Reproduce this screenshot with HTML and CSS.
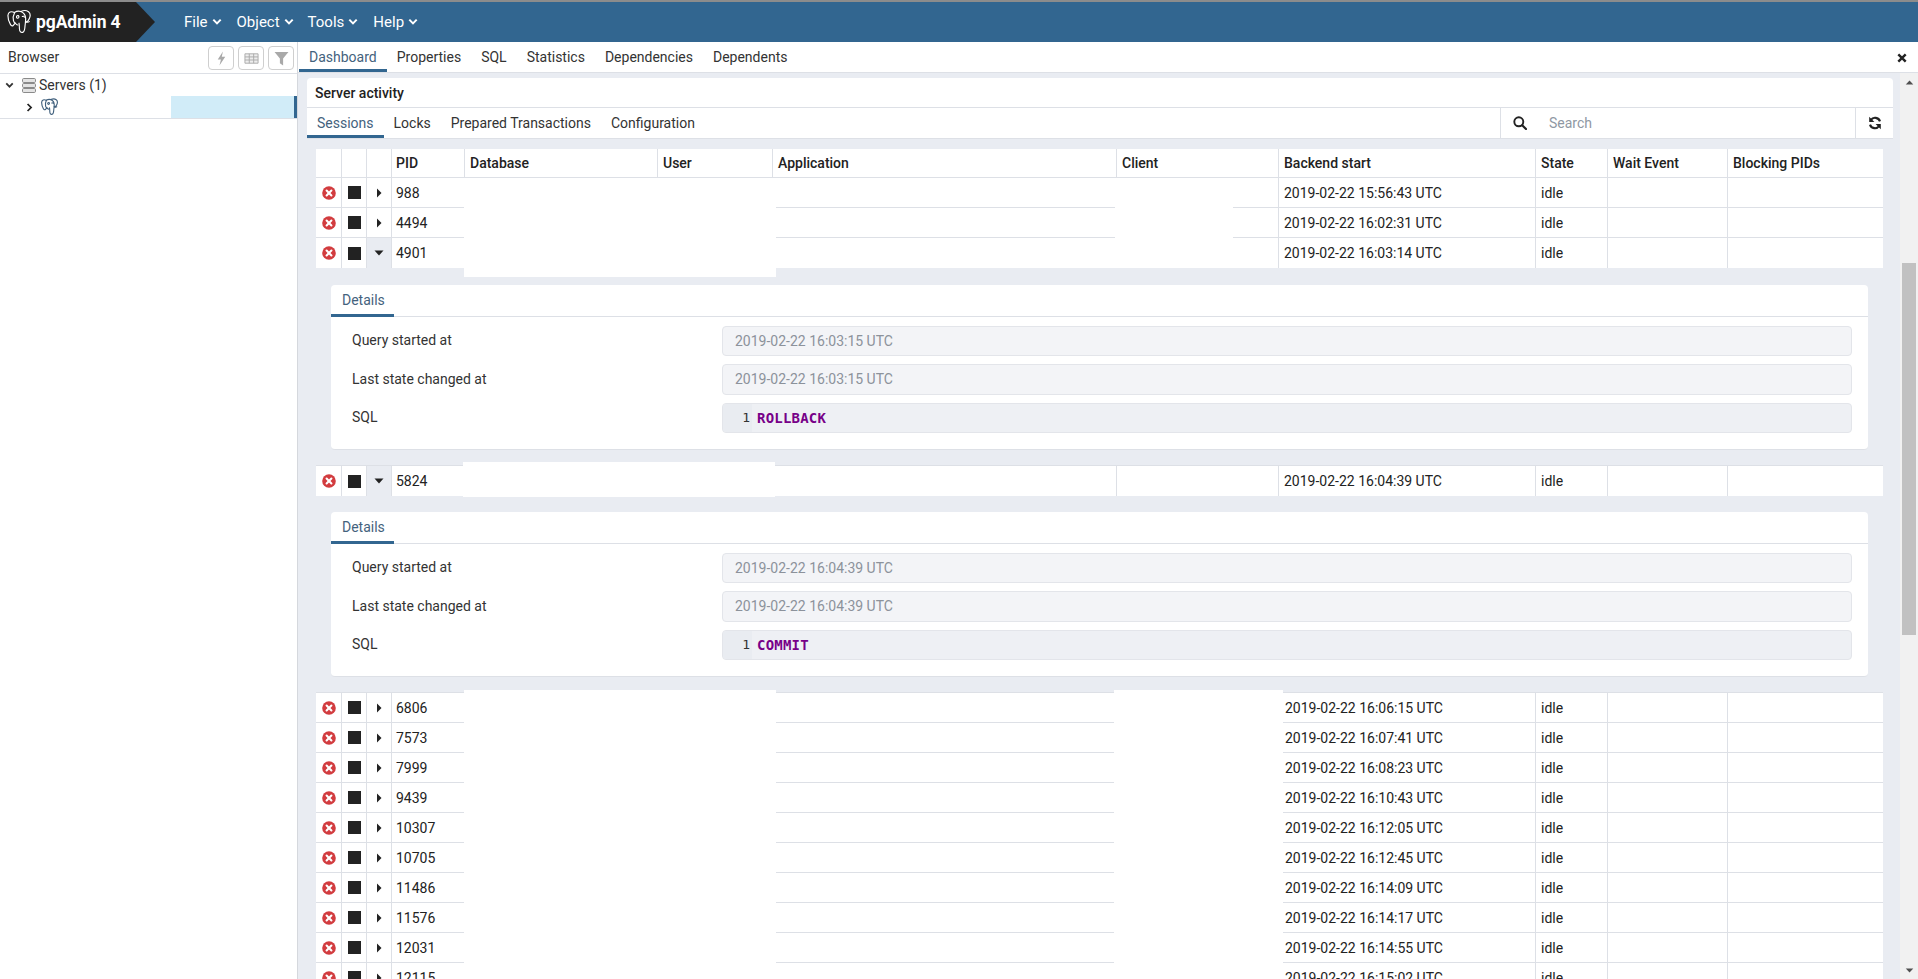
FILE: index.html
```html
<!DOCTYPE html>
<html lang="en">
<head>
<meta charset="utf-8">
<title>pgAdmin 4</title>
<link rel="stylesheet" href="styles.css">
</head>
<body>
<svg class="sprite" width="0" height="0" aria-hidden="true">
  <symbol id="i-cancel" viewBox="0 0 14 14"><circle cx="7" cy="7" r="6.8" fill="#d23c3f"/><path d="M4.6 4.6l4.8 4.8M9.4 4.6l-4.8 4.8" stroke="#fff" stroke-width="2.1" stroke-linecap="round"/></symbol>
  <symbol id="i-right" viewBox="0 0 6 10"><path d="M1 0.5v9L5.5 5z" fill="#222"/></symbol>
  <symbol id="i-down" viewBox="0 0 10 6"><path d="M0.5 0.5h9L5 5.5z" fill="#222"/></symbol>
  <symbol id="i-chev" viewBox="0 0 10 8"><path d="M1.3 1.6L5 5.4l3.7-3.8" fill="none" stroke="currentColor" stroke-width="2"/></symbol>
  <symbol id="i-chev-r" viewBox="0 0 8 10"><path d="M1.8 1L5.8 5l-4 4" fill="none" stroke="currentColor" stroke-width="2"/></symbol>
  <symbol id="i-pg" viewBox="0 0 26 27">
    <g fill="none" stroke="currentColor" stroke-linecap="round" stroke-linejoin="round">
      <path d="M8 3.2C4.6 1.4 1.2 2.6 1 6.4c-.1 3 1.500 7.500 2.700 9.700.8 1.500 2 2.100 3 1.200.7-.6 1.200-1.400 1.700-2"/>
      <path d="M8 3.200C10 2 12.500 1.300 15 2.200c2.500-1.300 6-1.500 8.300.2 2.200 1.700 2 5 .8 7.600-.8 1.800-1.900 3.100-3.100 3.700"/>
      <path d="M8.200 3.400C6.800 6 6.300 9.300 7 12c.4 1.600 1.200 2.700 2.300 3"/>
      <path d="M15 2.200c3 1.300 5 4 5.200 7.300.2 2.800-.5 6-.7 8.500-.2 2.700-.2 6-2.500 6.700-2.200.6-3.400-1.300-3.500-3.700-.1-2-.1-4.500-.5-6.200"/>
      <path d="M9.300 15c.5 1.200 1.300 1.700 2.500 1.700"/>
      <path d="M20.200 12.800c1.300.9 2.700 1.100 3.900.3"/>
      <path d="M11 6.800c-1 .6-1 2 .1 2.500 1.200.5 2.200-.9 1.700-2-.3-.7-1.100-.9-1.800-.5z"/>
      <path d="M16.600 7.500c1-.5 2.100-.2 2.200.7"/>
    </g>
  </symbol>
</svg>

<header class="nav">
  <div class="brand">
    <svg class="brand-logo"><use href="#i-pg"/></svg>
    <span class="brand-text">pgAdmin 4</span>
  </div>
  <nav class="menu">
    <span class="menu-item">File<svg class="menu-chev"><use href="#i-chev"/></svg></span>
    <span class="menu-item">Object<svg class="menu-chev"><use href="#i-chev"/></svg></span>
    <span class="menu-item">Tools<svg class="menu-chev"><use href="#i-chev"/></svg></span>
    <span class="menu-item">Help<svg class="menu-chev"><use href="#i-chev"/></svg></span>
  </nav>
</header>

<div class="app">
  <aside class="sidebar">
    <div class="side-head">
      <span class="side-title">Browser</span>
      <div class="side-tools">
        <button class="tool" type="button"><svg viewBox="0 0 12 16" class="tool-icon"><path d="M7.500 0.500L2 9h3.400L3.800 15.500 10 6.200H6.300z" fill="#a9a9a9"/></svg></button>
        <button class="tool" type="button"><svg viewBox="0 0 16 12" class="tool-icon"><path d="M1 1h14v10H1zM1 4.300h14M1 7.600h14M5.600 1v10M10.300 1v10" fill="#eee" stroke="#aaa" stroke-width="1"/></svg></button>
        <button class="tool" type="button"><svg viewBox="0 0 14 14" class="tool-icon"><path d="M0.500 1h13L8.500 7v6.500l-3-2V7z" fill="#a9a9a9"/></svg></button>
      </div>
    </div>
    <div class="tree-row">
      <svg class="tree-chev"><use href="#i-chev"/></svg>
      <svg class="servers-icon" viewBox="0 0 14 15"><g fill="#e4e4e4" stroke="#8a8a8a" stroke-width="1"><rect x="0.500" y="0.500" width="13" height="4" rx="1.200"/><rect x="0.500" y="5.500" width="13" height="4" rx="1.200"/><rect x="0.500" y="10.500" width="13" height="4" rx="1.200"/></g></svg>
      <span>Servers (1)</span>
    </div>
    <div class="tree-row tree-selected">
      <div class="tree-hidden">
        <svg class="tree-chev-r"><use href="#i-chev-r"/></svg>
        <svg class="tree-pg"><use href="#i-pg"/></svg>
      </div>
    </div>
  </aside>

  <main class="main">
    <div class="tabs">
      <span class="tab tab-active">Dashboard</span>
      <span class="tab">Properties</span>
      <span class="tab">SQL</span>
      <span class="tab">Statistics</span>
      <span class="tab">Dependencies</span>
      <span class="tab">Dependents</span>
      <svg class="tabs-close" viewBox="0 0 10 10"><path d="M1.300 1.300l7.400 7.400M8.700 1.300L1.300 8.700" stroke="#222" stroke-width="2.400"/></svg>
    </div>

    <div class="pane">
      <div class="content">
        <section class="card">
          <div class="card-head">Server activity</div>
          <div class="subbar">
            <div class="subtabs">
              <span class="tab subtab tab-active">Sessions</span>
              <span class="tab subtab">Locks</span>
              <span class="tab subtab">Prepared Transactions</span>
              <span class="tab subtab">Configuration</span>
            </div>
            <div class="search">
              <svg class="search-icon" viewBox="0 0 14 14"><circle cx="5.800" cy="5.800" r="4.500" fill="none" stroke="#222" stroke-width="1.900"/><path d="M9.200 9.200l3.800 3.800" stroke="#222" stroke-width="2.200" stroke-linecap="round"/></svg>
              <input class="search-input" type="text" placeholder="Search">
            </div>
            <div class="refresh"><svg class="refresh-icon" viewBox="0 0 14 14"><g fill="none" stroke="#222" stroke-width="2.100"><path d="M12 5.400A5.200 5.200 0 0 0 2.800 4"/><path d="M2 8.600A5.200 5.200 0 0 0 11.200 10"/></g><path d="M1.200 0.800V6H6.400zM12.800 13.200V8H7.600z" fill="#222"/></svg></div>
          </div>

          <div class="body">
            <div class="group">
              <div class="row row-head">
                <div class="cell"></div><div class="cell"></div><div class="cell"></div>
                <div class="cell">PID</div><div class="cell">Database</div><div class="cell">User</div><div class="cell">Application</div><div class="cell">Client</div><div class="cell">Backend start</div><div class="cell">State</div><div class="cell">Wait Event</div><div class="cell">Blocking PIDs</div>
              </div>
              <div class="row">
                <div class="cell act"><svg class="ic-cancel"><use href="#i-cancel"/></svg></div><div class="cell act"><span class="stop"></span></div><div class="cell act"><svg class="ic-right"><use href="#i-right"/></svg></div>
                <div class="cell">988</div><div class="cell"></div><div class="cell"></div><div class="cell"></div><div class="cell"></div><div class="cell">2019-02-22 15:56:43 UTC</div><div class="cell">idle</div><div class="cell"></div><div class="cell"></div>
              </div>
              <div class="row">
                <div class="cell act"><svg class="ic-cancel"><use href="#i-cancel"/></svg></div><div class="cell act"><span class="stop"></span></div><div class="cell act"><svg class="ic-right"><use href="#i-right"/></svg></div>
                <div class="cell">4494</div><div class="cell"></div><div class="cell"></div><div class="cell"></div><div class="cell"></div><div class="cell">2019-02-22 16:02:31 UTC</div><div class="cell">idle</div><div class="cell"></div><div class="cell"></div>
              </div>
              <div class="row row-open">
                <div class="cell act"><svg class="ic-cancel"><use href="#i-cancel"/></svg></div><div class="cell act"><span class="stop"></span></div><div class="cell act cell-open"><svg class="ic-down"><use href="#i-down"/></svg></div>
                <div class="cell">4901</div><div class="cell"></div><div class="cell"></div><div class="cell"></div><div class="cell"></div><div class="cell">2019-02-22 16:03:14 UTC</div><div class="cell">idle</div><div class="cell"></div><div class="cell"></div>
              </div>
              <div class="patch patch-a"></div>
              <div class="patch patch-b"></div>
            </div>

            <div class="details details-first">
              <div class="details-card">
                <div class="details-tabs"><span class="tab subtab tab-active details-tab">Details</span></div>
                <div class="form">
                  <label class="form-label">Query started at</label><div class="field">2019-02-22 16:03:15 UTC</div>
                  <label class="form-label">Last state changed at</label><div class="field">2019-02-22 16:03:15 UTC</div>
                  <label class="form-label">SQL</label><div class="field field-sql"><span class="gutter">1</span><code class="kw">ROLLBACK</code></div>
                </div>
              </div>
            </div>

            <div class="group">
              <div class="row row-open row-top">
                <div class="cell act"><svg class="ic-cancel"><use href="#i-cancel"/></svg></div><div class="cell act"><span class="stop"></span></div><div class="cell act cell-open"><svg class="ic-down"><use href="#i-down"/></svg></div>
                <div class="cell">5824</div><div class="cell"></div><div class="cell"></div><div class="cell"></div><div class="cell"></div><div class="cell">2019-02-22 16:04:39 UTC</div><div class="cell">idle</div><div class="cell"></div><div class="cell"></div>
              </div>
              <div class="patch patch-c"></div>
            </div>

            <div class="details details-second">
              <div class="details-card">
                <div class="details-tabs"><span class="tab subtab tab-active details-tab">Details</span></div>
                <div class="form">
                  <label class="form-label">Query started at</label><div class="field">2019-02-22 16:04:39 UTC</div>
                  <label class="form-label">Last state changed at</label><div class="field">2019-02-22 16:04:39 UTC</div>
                  <label class="form-label">SQL</label><div class="field field-sql"><span class="gutter">1</span><code class="kw">COMMIT</code></div>
                </div>
              </div>
            </div>

            <div class="group group-last">
              <div class="row row-top">
                <div class="cell act"><svg class="ic-cancel"><use href="#i-cancel"/></svg></div><div class="cell act"><span class="stop"></span></div><div class="cell act"><svg class="ic-right"><use href="#i-right"/></svg></div>
                <div class="cell">6806</div><div class="cell"></div><div class="cell"></div><div class="cell"></div><div class="cell"></div><div class="cell">2019-02-22 16:06:15 UTC</div><div class="cell">idle</div><div class="cell"></div><div class="cell"></div>
              </div>
              <div class="row">
                <div class="cell act"><svg class="ic-cancel"><use href="#i-cancel"/></svg></div><div class="cell act"><span class="stop"></span></div><div class="cell act"><svg class="ic-right"><use href="#i-right"/></svg></div>
                <div class="cell">7573</div><div class="cell"></div><div class="cell"></div><div class="cell"></div><div class="cell"></div><div class="cell">2019-02-22 16:07:41 UTC</div><div class="cell">idle</div><div class="cell"></div><div class="cell"></div>
              </div>
              <div class="row">
                <div class="cell act"><svg class="ic-cancel"><use href="#i-cancel"/></svg></div><div class="cell act"><span class="stop"></span></div><div class="cell act"><svg class="ic-right"><use href="#i-right"/></svg></div>
                <div class="cell">7999</div><div class="cell"></div><div class="cell"></div><div class="cell"></div><div class="cell"></div><div class="cell">2019-02-22 16:08:23 UTC</div><div class="cell">idle</div><div class="cell"></div><div class="cell"></div>
              </div>
              <div class="row">
                <div class="cell act"><svg class="ic-cancel"><use href="#i-cancel"/></svg></div><div class="cell act"><span class="stop"></span></div><div class="cell act"><svg class="ic-right"><use href="#i-right"/></svg></div>
                <div class="cell">9439</div><div class="cell"></div><div class="cell"></div><div class="cell"></div><div class="cell"></div><div class="cell">2019-02-22 16:10:43 UTC</div><div class="cell">idle</div><div class="cell"></div><div class="cell"></div>
              </div>
              <div class="row">
                <div class="cell act"><svg class="ic-cancel"><use href="#i-cancel"/></svg></div><div class="cell act"><span class="stop"></span></div><div class="cell act"><svg class="ic-right"><use href="#i-right"/></svg></div>
                <div class="cell">10307</div><div class="cell"></div><div class="cell"></div><div class="cell"></div><div class="cell"></div><div class="cell">2019-02-22 16:12:05 UTC</div><div class="cell">idle</div><div class="cell"></div><div class="cell"></div>
              </div>
              <div class="row">
                <div class="cell act"><svg class="ic-cancel"><use href="#i-cancel"/></svg></div><div class="cell act"><span class="stop"></span></div><div class="cell act"><svg class="ic-right"><use href="#i-right"/></svg></div>
                <div class="cell">10705</div><div class="cell"></div><div class="cell"></div><div class="cell"></div><div class="cell"></div><div class="cell">2019-02-22 16:12:45 UTC</div><div class="cell">idle</div><div class="cell"></div><div class="cell"></div>
              </div>
              <div class="row">
                <div class="cell act"><svg class="ic-cancel"><use href="#i-cancel"/></svg></div><div class="cell act"><span class="stop"></span></div><div class="cell act"><svg class="ic-right"><use href="#i-right"/></svg></div>
                <div class="cell">11486</div><div class="cell"></div><div class="cell"></div><div class="cell"></div><div class="cell"></div><div class="cell">2019-02-22 16:14:09 UTC</div><div class="cell">idle</div><div class="cell"></div><div class="cell"></div>
              </div>
              <div class="row">
                <div class="cell act"><svg class="ic-cancel"><use href="#i-cancel"/></svg></div><div class="cell act"><span class="stop"></span></div><div class="cell act"><svg class="ic-right"><use href="#i-right"/></svg></div>
                <div class="cell">11576</div><div class="cell"></div><div class="cell"></div><div class="cell"></div><div class="cell"></div><div class="cell">2019-02-22 16:14:17 UTC</div><div class="cell">idle</div><div class="cell"></div><div class="cell"></div>
              </div>
              <div class="row">
                <div class="cell act"><svg class="ic-cancel"><use href="#i-cancel"/></svg></div><div class="cell act"><span class="stop"></span></div><div class="cell act"><svg class="ic-right"><use href="#i-right"/></svg></div>
                <div class="cell">12031</div><div class="cell"></div><div class="cell"></div><div class="cell"></div><div class="cell"></div><div class="cell">2019-02-22 16:14:55 UTC</div><div class="cell">idle</div><div class="cell"></div><div class="cell"></div>
              </div>
              <div class="row">
                <div class="cell act"><svg class="ic-cancel"><use href="#i-cancel"/></svg></div><div class="cell act"><span class="stop"></span></div><div class="cell act"><svg class="ic-right"><use href="#i-right"/></svg></div>
                <div class="cell">12115</div><div class="cell"></div><div class="cell"></div><div class="cell"></div><div class="cell"></div><div class="cell">2019-02-22 16:15:02 UTC</div><div class="cell">idle</div><div class="cell"></div><div class="cell"></div>
              </div>
              <div class="patch patch-d"></div>
              <div class="patch patch-e"></div>
            </div>
          </div>
        </section>
      </div>
      <div class="scrollbar">
        <svg class="sb-arrow" viewBox="0 0 10 6"><path d="M5 0.500l4.500 5h-9z" fill="#505050"/></svg>
        <div class="sb-thumb"></div>
        <svg class="sb-arrow sb-arrow-end" viewBox="0 0 10 6"><path d="M0.500 0.500h9L5 5.500z" fill="#505050"/></svg>
      </div>
    </div>
  </main>
</div>
</body>
</html>
```

FILE: styles.css
```css
* { box-sizing: border-box; }
html, body { margin: 0; padding: 0; height: 100%; }
body {
  overflow: hidden;
  background: #fff;
  color: #222;
  font-family: Roboto, "Liberation Sans", sans-serif;
  font-size: 14px;
  line-height: 20px;
  display: flex;
  flex-direction: column;
  border-top: 2px solid #8c8c8c;
}
.sprite { position: absolute; }

/* top bar */
.nav {
  height: 40px;
  flex: none;
  display: flex;
  align-items: center;
  background: #326690;
  color: #fff;
}
.brand {
  width: 156px;
  height: 40px;
  flex: none;
  display: flex;
  align-items: center;
  padding-left: 7px;
  background: #222;
  clip-path: polygon(0 0, 136px 0, 155px 20px, 136px 40px, 0 40px);
}
.brand-logo { width: 24px; height: 26px; color: #fff; flex: none; stroke-width: 1.25; }
.brand-text { margin-left: 5px; font-size: 17.5px; font-weight: 700; line-height: 40px; letter-spacing: -0.1px; }
.menu { display: flex; margin-left: 28px; }
.menu-item { display: flex; align-items: center; font-size: 15px; margin-right: 15px; }
.menu-item:nth-child(2) { margin-right: 14px; }
.menu-chev { width: 10px; height: 8px; margin-left: 4px; color: #fff; }

/* layout */
.app { flex: 1; min-height: 0; display: flex; }
.sidebar { width: 298px; flex: none; border-right: 1px solid #d5d8dd; }
.side-head {
  height: 32px;
  display: flex;
  align-items: center;
  justify-content: space-between;
  padding: 0 3px 0 8px;
  border-bottom: 1px solid #dde0e6;
}
.side-title { color: #333; margin-top: -1px; }
.side-tools { display: flex; gap: 4px; margin-top: 1px; }
.tool {
  width: 26px;
  height: 24px;
  padding: 0;
  display: flex;
  align-items: center;
  justify-content: center;
  background: #fff;
  border: 1px solid #cfcfcf;
  border-radius: 4px;
}
.tool-icon { width: 15px; height: 15px; }
.tree-row { height: 22px; display: flex; align-items: center; padding-left: 5px; font-size: 14px; color: #333; }
.tree-chev { width: 9px; height: 7px; color: #333; flex: none; margin-right: 8px; }
.servers-icon { width: 14px; height: 15px; flex: none; margin-right: 3px; }
.tree-selected {
  padding-left: 0;
  background: #d1ecf8;
  border-right: 3px solid #326690;
  box-shadow: 0 1px 0 #dde0e6;
}
.tree-hidden { width: 171px; height: 22px; background: #fff; display: flex; align-items: center; padding-left: 26px; }
.tree-chev-r { width: 7px; height: 9px; color: #222; flex: none; margin-right: 8px; }
.tree-pg { width: 17px; height: 18px; color: #3f5f7c; flex: none; stroke-width: 1.7; }

.main { flex: 1; min-width: 0; display: flex; flex-direction: column; }
.tabs {
  height: 31px;
  flex: none;
  display: flex;
  align-items: stretch;
  padding-left: 1px;
  border-bottom: 1px solid #dde0e6;
  position: relative;
}
.tab { display: flex; align-items: center; padding: 0 10px; margin-right: 0; color: #333; white-space: nowrap; }
.tab-active { color: #44627d; box-shadow: inset 0 -3px 0 #326690; }
.tabs-close { width: 10px; height: 10px; margin: 11px 11px 0 auto; }

.pane { flex: 1; min-height: 0; display: flex; background: #e9ecf2; }
.content { flex: 1; min-width: 0; overflow: hidden; padding: 5px 7px 0 9px; }
.card { background: #e9ecf2; border-radius: 4px 4px 0 0; }
.card-head {
  height: 30px;
  padding-left: 8px;
  display: flex;
  align-items: center;
  font-weight: 500;
  background: #fff;
  border-bottom: 1px solid #dde0e6;
  border-radius: 4px 4px 0 0;
}
.subbar {
  height: 31px;
  display: flex;
  background: #fff;
  border-bottom: 1px solid #dde0e6;
}
.subtabs { flex: 1; display: flex; }
.subtab { padding: 0 10px; }
.search {
  width: 355px;
  flex: none;
  display: flex;
  align-items: center;
  padding-left: 12px;
  border-left: 1px solid #dde0e6;
}
.search-icon { width: 14px; height: 14px; flex: none; }
.search-input {
  flex: 1;
  min-width: 0;
  margin-left: 22px;
  border: 0;
  padding: 0;
  outline: 0;
  font: inherit;
  background: transparent;
}
.search-input::placeholder { color: #8f98a3; opacity: 1; }
.refresh { width: 38px; flex: none; display: flex; align-items: center; justify-content: center; border-left: 1px solid #dde0e6; }
.refresh-icon { width: 14px; height: 14px; }

/* table */
.body { padding: 10px 10px 0 9px; }
.group { position: relative; }
.row {
  display: grid;
  grid-template-columns: 26px 25px 25px 73px 193px 115px 344px 162px 257px 72px 120px 154px;
  height: 30px;
  background: #fff;
  border-bottom: 1px solid #dde0e6;
}
.row-head { height: 29px; font-weight: 500; }
.row-open { border-bottom: 0; }
.row-top { height: 31px; border-top: 1px solid #dde0e6; }
.row-top.row-open { border-bottom: 0; }
.cell {
  display: flex;
  align-items: center;
  padding-left: 5px;
  border-right: 1px solid #dde0e6;
  min-width: 0;
  white-space: nowrap;
}
.cell:last-child { border-right: 0; }
.cell:nth-child(4) { padding-left: 4px; }
.group-last .cell:nth-child(9) { padding-left: 6px; }
.act { padding: 0; justify-content: center; }
.cell-open { background: #e9ecf2; }
.ic-cancel { width: 14px; height: 14px; }
.stop { display: block; width: 13px; height: 13px; background: #222; }
.ic-right { width: 6px; height: 10px; }
.ic-down { width: 10px; height: 6px; }

/* redaction over the data cells */
.patch { position: absolute; background: #fff; }
.patch-a { left: 148px; width: 312px; top: 29px; height: 99px; }
.patch-b { left: 799px; width: 118px; top: 29px; height: 90px; }
.patch-c { left: 147px; width: 312px; top: -3px; height: 35px; }
.patch-d { left: 148px; width: 312px; top: -2px; bottom: 0; }
.patch-e { left: 798px; width: 169px; top: -2px; bottom: 0; }

/* details */
.details { padding: 17px 15px 15px 15px; }
.details-second { padding: 16px 15px 15px 15px; }
.details-card { height: 165px; background: #fff; border-radius: 4px; border-bottom: 1px solid #dde0e6; }
.details-tabs { height: 32px; display: flex; border-bottom: 1px solid #dde0e6; }
.details-tab { width: 63px; padding: 0 0 2px 11px; height: 32px; }
.form {
  display: grid;
  grid-template-columns: 370px 1fr;
  grid-auto-rows: 30.5px;
  row-gap: 8px;
  padding: 8.5px 16px 0 21px;
}
.form-label { display: flex; align-items: center; color: #333; margin-top: -1px; }
.field {
  display: flex;
  align-items: center;
  padding-left: 12px;
  color: #8c929b;
  background: #f3f4f7;
  border: 1px solid #e3e5ea;
  border-radius: 4px;
}
.field-sql { padding-left: 0; background: #eef0f4; overflow: hidden; }
.gutter {
  width: 29px;
  flex: none;
  align-self: stretch;
  display: flex;
  align-items: center;
  justify-content: flex-end;
  padding-right: 2px;
  color: #333;
  font-family: "DejaVu Sans Mono", monospace;
  font-size: 13px;
  background: #e9ecf1;
}
.kw {
  margin-left: 5px;
  color: #770088;
  font-family: "DejaVu Sans Mono", monospace;
  font-size: 14px;
  font-weight: 700;
  letter-spacing: 0.2px;
}

/* scrollbar */
.scrollbar {
  width: 18px;
  flex: none;
  display: flex;
  flex-direction: column;
  align-items: center;
  padding: 7px 0 6px;
  background: #f1f1f1;
}
.sb-arrow { width: 9px; height: 5px; flex: none; margin-left: 0; }
.sb-arrow-end { margin-top: auto; }
.sb-thumb { width: 14px; height: 372px; margin-top: 178px; background: #c1c1c1; flex: none; }
```
